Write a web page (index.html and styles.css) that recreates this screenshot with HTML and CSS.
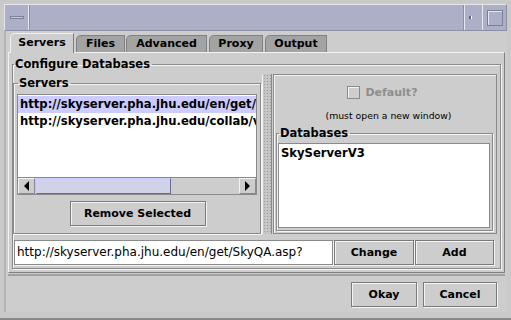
FILE: index.html
```html
<!DOCTYPE html>
<html>
<head>
<meta charset="utf-8">
<link rel="stylesheet" href="styles.css">
</head>
<body>
<div class="window">
  <div class="titlebar">
    <div class="tb-btn tb-menu"><span class="dash"></span></div>
    <div class="tb-title"></div>
    <div class="tb-btn tb-min"><span class="dot"></span></div>
    <div class="tb-btn tb-max"><span class="box"></span></div>
  </div>
  <div class="content">
    <div class="tabs">
      <div class="tab selected t-servers">Servers</div>
      <div class="tab t-files">Files</div>
      <div class="tab t-advanced">Advanced</div>
      <div class="tab t-proxy">Proxy</div>
      <div class="tab t-output">Output</div>
    </div>
    <div class="tabpanel">
      <fieldset class="group configure">
        <legend>Configure Databases</legend>
        <div class="split">
          <div class="left">
            <fieldset class="group servers">
              <legend>Servers</legend>
              <div class="listbox">
                <div class="list">
                  <div class="row sel">http://skyserver.pha.jhu.edu/en/get/SkyQA.asp?</div>
                  <div class="row">http://skyserver.pha.jhu.edu/collab/v</div>
                </div>
                <div class="hscroll">
                  <div class="arrow"><span class="tri-l"></span></div>
                  <div class="track"><div class="thumb"></div></div>
                  <div class="arrow"><span class="tri-r"></span></div>
                </div>
              </div>
              <div class="center">
                <button class="btn remove">Remove Selected</button>
              </div>
            </fieldset>
          </div>
          <div class="divider"></div>
          <div class="right">
            <div class="check">
              <span class="cb"></span><span class="cb-label">Default?</span>
            </div>
            <div class="note">(must open a new window)</div>
            <fieldset class="group dbs">
              <legend>Databases</legend>
              <div class="dblist">
                <div class="row">SkyServerV3</div>
              </div>
            </fieldset>
          </div>
        </div>
        <div class="entry">
          <div class="field">http://skyserver.pha.jhu.edu/en/get/SkyQA.asp?</div>
          <button class="btn change">Change</button>
          <button class="btn add">Add</button>
        </div>
      </fieldset>
    </div>
    <div class="footer">
      <button class="btn okay">Okay</button>
      <button class="btn cancel">Cancel</button>
    </div>
  </div>
</div>
</body>
</html>
```
FILE: styles.css
```css
* { box-sizing: border-box; }
html, body { margin: 0; padding: 0; }
body {
  width: 511px; height: 320px; overflow: hidden;
  background: #d4d4d4;
  font-family: "DejaVu Sans", sans-serif;
  font-size: 11px;
  color: #000;
}
.window {
  width: 511px; height: 320px;
  padding: 4px 4px 6px 4px;
  display: flex; flex-direction: column;
  background: #c9c9c9;
  border-bottom: 2px solid #8a8a8a;
}
.titlebar {
  height: 27px;
  display: flex;
  background: #abafc7;
  border: 1px solid #e6e6ea;
  border-right-color: #8d90a2;
  border-bottom-color: #8d90a2;
}
.tb-btn { display: flex; align-items: center; justify-content: center; border-right: 1px solid #e0e2ea; }
.tb-menu { width: 24px; border-right: 1px solid #e6e8f0; }
.tb-menu .dash { width: 14px; height: 3px; background: #c8cbd8; border: 1px solid #7d8093; }
.tb-title { flex: 1; border-left: 1px solid #8d90a2; border-right: 1px solid #8d90a2; }
.tb-min { width: 12px; border-left: 1px solid #e6e8f0; border-right: none; }
.tb-min .dot { width: 3px; height: 3px; background: #666; border-right: 1px solid #fff; }
.tb-max { width: 24px; border-left: 1px solid #e6e8f0; border-right: none; margin-left: 6px; }
.tb-max .box { width: 16px; height: 16px; border: 1px solid #7d8093; box-shadow: inset 1px 1px 0 #e6e8f0; }
.content {
  flex: 1;
  background: #cdcdcd;
  border-left: 2px solid #b4b4b4;
  display: flex; flex-direction: column;
  padding: 2px 2px 0 2px;
}
.tabs { display: flex; height: 19px; padding-left: 2px; }
.tab {
  font-weight: bold; font-size: 11px;
  text-align: center;
  background: #a3a3a3;
  border: 1px solid #808080;
  border-bottom: none;
  border-top-left-radius: 5px;
  margin-top: 2px;
  line-height: 16px;
  margin-left: 1px;
}
.tab.selected {
  background: #cdcdcd;
  border-color: #f2f2f2 #808080 transparent #f2f2f2;
  margin-top: 0;
  line-height: 18px;
  position: relative; z-index: 1;
  margin-bottom: -1px;
  margin-left: 0;
}
.t-servers { width: 64px; }
.t-files { width: 49px; margin-left: 2px; }
.t-advanced { width: 81px; }
.t-proxy { width: 54px; margin-left: 2px; }
.t-output { width: 62px; margin-left: 2px; }
.tabpanel {
  height: 221px;
  border: 1px solid #f2f2f2;
  border-right-color: #808080;
  border-bottom-color: #808080;
  padding: 4px 3px 3px 3px;
  display: flex;
}
fieldset.group {
  margin: 0; padding: 0;
  border: 1px solid #8a8a8a;
  box-shadow: 1px 1px 0 #f4f4f4, inset 1px 1px 0 #f4f4f4;
  min-width: 0;
}
fieldset.group > legend {
  font-weight: bold; font-size: 11.5px;
  padding: 0 2px 0 1px;
  margin-left: 1px;
  line-height: 14px;
}
.configure { flex: 1; display: flex; flex-direction: column; padding: 0 3px 3px 0 !important; }
.split { display: flex; height: 160px; margin-top: 3px; }
.left { width: 248px; display: flex; padding-top: 2px; }
.servers { flex: 1; display: flex; flex-direction: column; padding: 0 3px 6px 3px !important; }
.listbox { height: 101px; border: 1px solid #8a8a8a; background: #fff; display: flex; flex-direction: column; margin-top: 4px; }
.list { flex: 1; overflow: hidden; white-space: nowrap; padding-top: 1px; }
.row { font-weight: bold; font-size: 11.6px; line-height: 17px; padding-left: 2px; }
.row.sel { background: #ccccff; }
.hscroll { height: 17px; display: flex; background: #cdcdcd; border-top: 1px solid #8a8a8a; }
.arrow {
  width: 17px; display: flex; align-items: center; justify-content: center;
  border: 1px solid #f4f4f4; border-right-color: #8a8a8a; border-bottom-color: #8a8a8a;
}
.tri-l { width: 0; height: 0; border-top: 5px solid transparent; border-bottom: 5px solid transparent; border-right: 5px solid #000; }
.tri-r { width: 0; height: 0; border-top: 5px solid transparent; border-bottom: 5px solid transparent; border-left: 5px solid #000; }
.track { flex: 1; padding: 0 68px 0 1px; display: flex; }
.thumb {
  flex: 1;
  background-color: #a9acc9;
  background-image: radial-gradient(#d2d4e8 0.7px, transparent 0.9px);
  background-size: 2px 2px;
  border: 1px solid #ccccff; border-right-color: #6a6d8a; border-bottom-color: #6a6d8a;
}
.center { display: flex; justify-content: center; padding-top: 6px; }
.btn {
  font-family: "DejaVu Sans", sans-serif;
  font-weight: bold; font-size: 11px;
  background: #cdcdcd;
  border: 1px solid #7a7a7a;
  box-shadow: inset 1px 1px 0 #f4f4f4, 1px 1px 0 #f4f4f4;
  padding: 0; margin: 0;
  color: #000;
}
.remove { width: 136px; height: 25px; margin-left: 1px; }
.divider {
  width: 10px; margin: 0 0 0 1px;
  background-color: #c6c6c6;
  background-image: radial-gradient(#9a9a9a 0.6px, transparent 0.8px);
  background-size: 3px 3px;
  border-left: 1px solid #f0f0f0; border-right: 1px solid #8a8a8a;
}
.right {
  flex: 1;
  border: 1px solid #8a8a8a;
  box-shadow: inset 1px 1px 0 #f4f4f4;
  display: flex; flex-direction: column; align-items: stretch;
  padding: 8px 3px 2px 2px;
  margin-left: 1px;
}
.check { display: flex; align-items: center; justify-content: center; gap: 5px; height: 18px; padding-right: 4px; }
.cb { width: 13px; height: 13px; border: 1px solid #8a8a8a; box-shadow: inset 1px 1px 0 #f4f4f4; }
.cb-label { font-weight: bold; font-size: 11px; color: #8e8e8e; }
.note { text-align: center; font-size: 9.3px; height: 14px; line-height: 14px; margin-top: 8px; padding-left: 8px; }
.dbs { flex: 1; display: flex; padding: 3px 2px 2px 1px !important; margin-top: 3px !important; }
.dblist { flex: 1; background: #fff; border: 1px solid #8a8a8a; padding-top: 1px; }
.entry { display: flex; height: 25px; margin: 6px 3px 0 1px; gap: 1px; }
.field {
  width: 319px; background: #fff;
  border: 1px solid #8a8a8a; box-shadow: 1px 1px 0 #f4f4f4;
  font-size: 12px; line-height: 22px; padding-left: 2px; white-space: nowrap; overflow: hidden;
}
.change { width: 80px; }
.add { flex: 1; }
.footer {
  flex: 1;
  border-top: 2px solid #a0a0a0;
  margin-top: 1px;
  display: flex; justify-content: flex-end; align-items: flex-start;
  padding: 6px 8px 0 0; gap: 6px;
}
.okay { width: 66px; height: 25px; }
.cancel { width: 74px; height: 25px; }
```
